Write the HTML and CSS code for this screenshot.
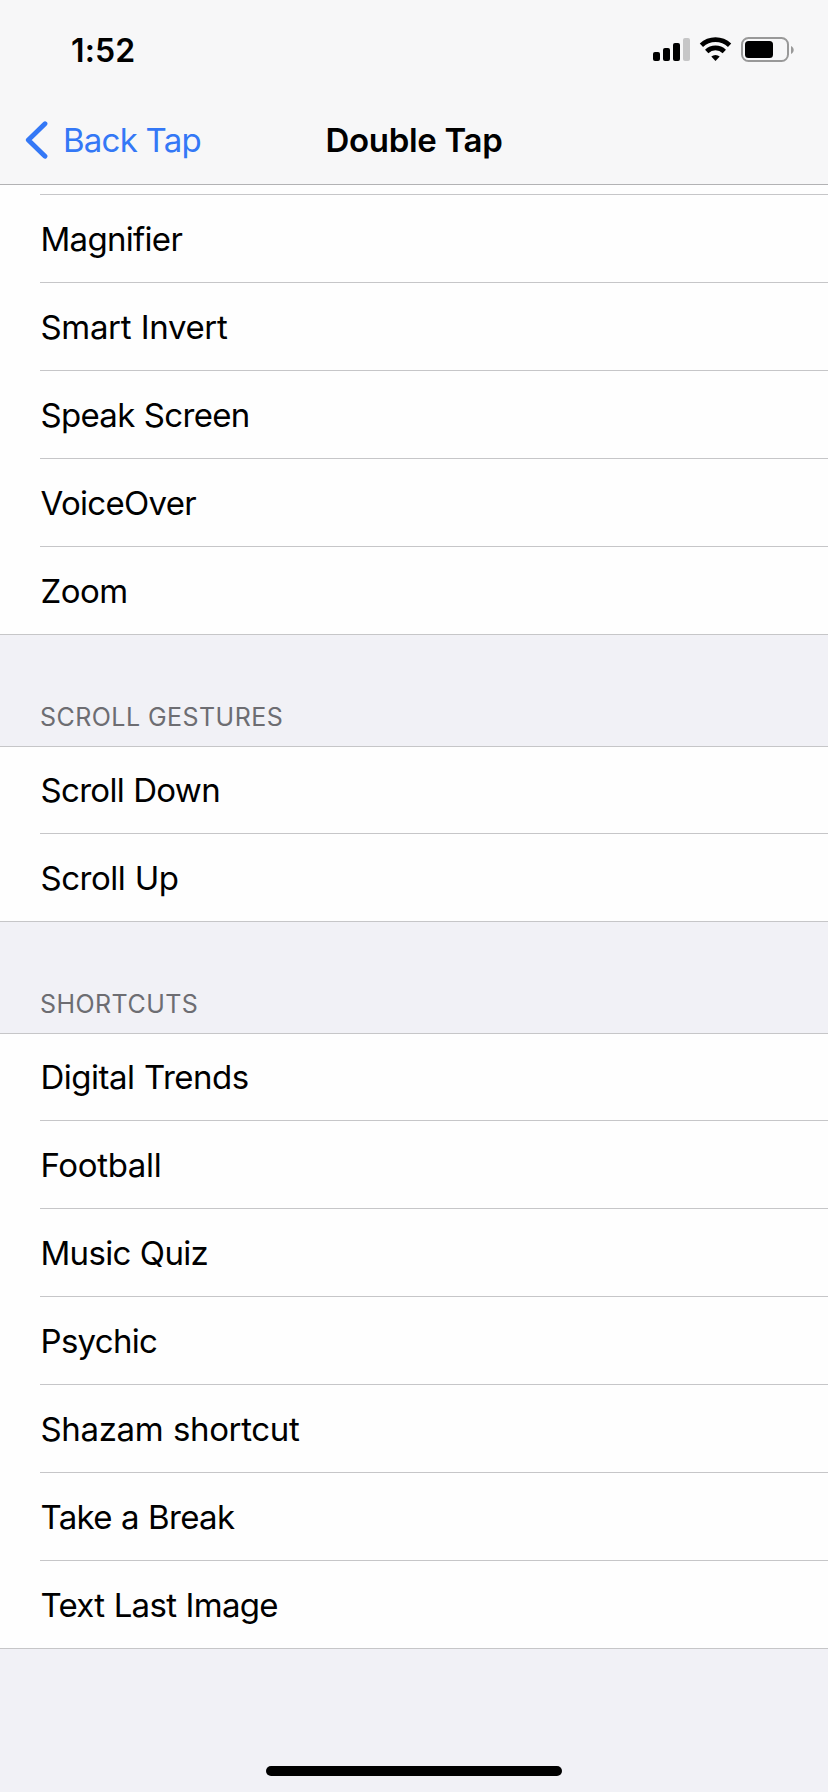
FILE: index.html
```html
<!DOCTYPE html>
<html lang="en">
<head>
<meta charset="utf-8">
<title>Double Tap</title>
<link rel="stylesheet" href="styles.css">
</head>
<body>
<div class="screen">
  <header class="header">
    <div class="status">
      <span class="time">1:52</span>
      <svg class="indicators" width="160" height="30" viewBox="0 0 160 30">
        <g fill="#000">
          <rect x="3" y="17" width="7" height="9" rx="2"/>
          <rect x="13" y="13" width="7" height="13" rx="2"/>
          <rect x="23" y="8" width="7" height="18" rx="2"/>
          <rect x="33" y="3" width="7" height="23" rx="2" fill="#c6c6c7"/>
        </g>
        <g fill="none" stroke="#000" stroke-width="4.8">
          <path d="M51.4 10.3a20.6 20.6 0 0 1 28.2 0"/>
          <path d="M56.7 16.4a12.8 12.8 0 0 1 17.6 0"/>
        </g>
        <path d="M61.3 21.6a6.2 6.2 0 0 1 8.4 0L65.5 26z" fill="#000"/>
        <rect x="92" y="3" width="46" height="23" rx="6.5" fill="none" stroke="#999" stroke-width="2"/>
        <rect x="95" y="6" width="28" height="17" rx="3.5"/>
        <path d="M141 11c3.6 1.6 3.6 6.4 0 8z" fill="#999"/>
      </svg>
    </div>
    <nav class="nav">
      <a class="back">
        <svg class="chevron" width="24" height="40" viewBox="0 0 24 40"><path d="M20 3.7L3.3 20L20 36.3" fill="none" stroke="#3478f6" stroke-width="4.8" stroke-linecap="round" stroke-linejoin="round"/></svg>
        <span>Back Tap</span>
      </a>
      <h1 class="title">Double Tap</h1>
    </nav>
  </header>
  <main>
    <ul class="list list-cut">
      <li class="row snug">Magnifier</li>
      <li class="row loose">Smart Invert</li>
      <li class="row snug">Speak Screen</li>
      <li class="row snug">VoiceOver</li>
      <li class="row">Zoom</li>
    </ul>
    <h2 class="group">SCROLL GESTURES</h2>
    <ul class="list">
      <li class="row snug">Scroll Down</li>
      <li class="row">Scroll Up</li>
    </ul>
    <h2 class="group">SHORTCUTS</h2>
    <ul class="list">
      <li class="row">Digital Trends</li>
      <li class="row loose">Football</li>
      <li class="row snug">Music Quiz</li>
      <li class="row snug">Psychic</li>
      <li class="row loose">Shazam shortcut</li>
      <li class="row snug">Take a Break</li>
      <li class="row snug">Text Last Image</li>
    </ul>
  </main>
  <div class="home"></div>
</div>
</body>
</html>
```
FILE: styles.css
```css
* { box-sizing: border-box; }
body { margin: 0; font-family: Inter, "Liberation Sans", sans-serif; color: #000; }
.screen { width: 828px; height: 1792px; background: #f1f1f6; display: flex; flex-direction: column; overflow: hidden; }
.header { height: 185px; background: #f7f7f8; border-bottom: 1px solid #b2b2b4; }
.status { height: 96px; padding: 4px 18px 0 71px; display: flex; align-items: center; justify-content: space-between; }
.time { font-size: 32px; font-weight: 600; letter-spacing: 0.1px; }
.nav { height: 88px; display: grid; grid-template-columns: 1fr auto 1fr; align-items: center; padding: 0 25px; }
.back { display: flex; align-items: center; gap: 14px; color: #3478f6; font-size: 33px; letter-spacing: -0.75px; }
.chevron { flex: none; }
.title { margin: 0; font-size: 33px; font-weight: 600; letter-spacing: -0.3px; }
.list { margin: 0; padding: 0; list-style: none; background: #fefefe; border-top: 1px solid #c6c6c8; border-bottom: 1px solid #c6c6c8; }
.list-cut { padding-top: 9px; border-top: 0; }
.row { height: 88px; margin-left: 40px; padding-left: 0.5px; display: flex; align-items: center; font-size: 33px; letter-spacing: -0.5px; word-spacing: 0.7px; border-top: 1px solid #c6c6c8; }
.snug { letter-spacing: -0.7px; }
.loose { letter-spacing: -0.35px; }
.list:not(.list-cut) .row:first-child { height: 86px; border-top: 0; }
.group { margin: 0; height: 111px; padding: 0 0 17px 40px; display: flex; align-items: flex-end; font-size: 25px; line-height: 24px; font-weight: 400; letter-spacing: 0.45px; color: #6d6d72; }
.home { width: 296px; height: 10px; border-radius: 5px; background: #000; margin: auto auto 16px; }
```
